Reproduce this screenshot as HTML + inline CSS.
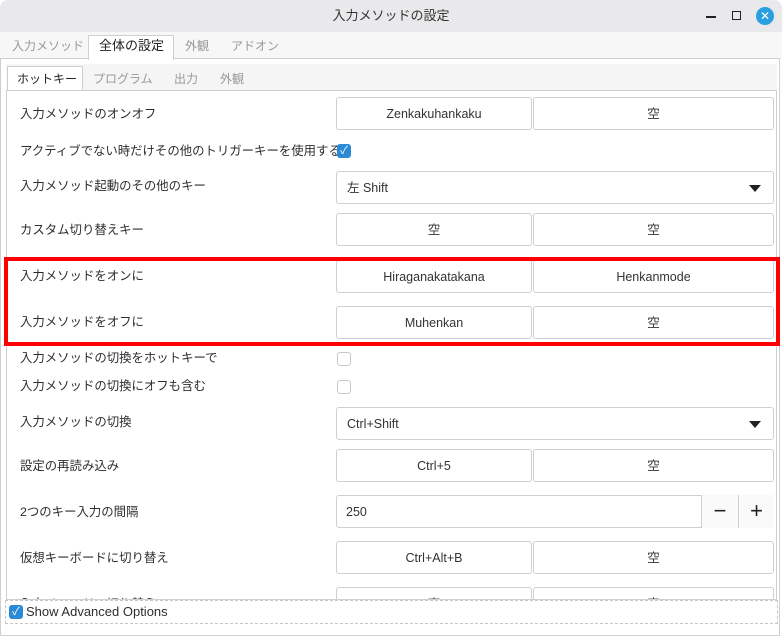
<!DOCTYPE html>
<html><head><meta charset="utf-8"><style>
*{box-sizing:border-box;margin:0;padding:0}
body{width:782px;height:639px;overflow:hidden;background:#fff;font-family:"Liberation Sans","Noto Sans CJK JP",sans-serif;font-size:12.5px;color:#2e2e2e;position:relative}
.a{position:absolute}
.title{left:0;top:0;width:782px;height:32px;background:#e9e9eb;border-radius:8px 8px 0 0;text-align:center;line-height:32px;font-size:13px;color:#333}
.otabs{left:0;top:32px;width:782px;height:26px;background:#f7f7f7}
.tab{position:absolute;line-height:26px;color:#999;font-size:12px}
.frame{left:0;top:58px;width:780px;height:578px;border:1px solid #cfcfd2;background:#fff}
.itabs{left:6px;top:64px;width:771px;height:26px;background:#f5f5f5}
.inner{left:6px;top:90px;width:771px;height:510px;border:1px solid #cfcfd2;overflow:hidden;background:#fff}
.btn{position:absolute;height:33px;border:1px solid #cfcfd3;border-radius:3px;background:#fff;text-align:center;line-height:33px;font-size:12.5px;color:#333}
.lbl{position:absolute;left:14px;font-size:12.4px;color:#2e2e2e;line-height:16px}
.cb{position:absolute;width:14px;height:14px;border:1px solid #c9c9cc;border-radius:3px;background:#fff}
.cbon{background:#2a8ad6;border-color:#2a8ad6;color:#fff;font-size:11px;line-height:12px;text-align:center}
.arrow{position:absolute;right:12px;top:13px;width:0;height:0;border-left:6px solid transparent;border-right:6px solid transparent;border-top:7px solid #222}
.pm{position:absolute;top:-1px;height:33px;border-left:1px solid #cfcfd3;background:#fafafa;font-size:22px;line-height:31px;color:#222;text-align:center}
</style></head><body>
<div class="a title">入力メソッドの設定</div>
<div class="a" style="left:706px;top:16px;width:10px;height:1.5px;background:#222"></div>
<div class="a" style="left:732px;top:11px;width:9px;height:9px;border:1.5px solid #222"></div>
<div class="a" style="left:756px;top:7px;width:18px;height:18px;border-radius:50%;background:#2a9fe0;color:#fff;text-align:center;line-height:18px;font-size:12px">✕</div>
<div class="a otabs"></div>
<div class="a frame"></div>
<div class="a" style="left:88px;top:35px;width:86px;height:25px;background:#fff;border:1px solid #cfcfd2;border-bottom:none"></div>
<div class="tab" style="left:12px;top:33px">入力メソッド</div>
<div class="tab" style="left:99px;top:33px;color:#222;font-size:13px">全体の設定</div>
<div class="tab" style="left:185px;top:33px">外観</div>
<div class="tab" style="left:231px;top:33px">アドオン</div>
<div class="a itabs"></div>
<div class="a" style="left:7px;top:66px;width:76px;height:25px;background:#fff;border:1px solid #cfcfd2;border-bottom:none"></div>
<div class="tab" style="left:17px;top:66px;color:#222">ホットキー</div>
<div class="tab" style="left:93px;top:66px">プログラム</div>
<div class="tab" style="left:174px;top:66px">出力</div>
<div class="tab" style="left:220px;top:66px">外観</div>
<div class="a inner">
<div style="position:absolute;left:-7px;top:-91px;width:782px;height:700px">
<div class="lbl" style="left:20px;top:106px">入力メソッドのオンオフ</div>
<div class="btn" style="left:336px;top:97px;width:196px">Zenkakuhankaku</div>
<div class="btn" style="left:533px;top:97px;width:241px">空</div>
<div class="lbl" style="left:20px;top:143px">アクティブでない時だけその他のトリガーキーを使用する</div>
<div class="cb cbon" style="left:337px;top:144px">✓</div>
<div class="lbl" style="left:20px;top:178px">入力メソッド起動のその他のキー</div>
<div class="btn" style="left:336px;top:171px;width:438px;text-align:left;padding-left:10px">左 Shift<div class="arrow"></div></div>
<div class="lbl" style="left:20px;top:222px">カスタム切り替えキー</div>
<div class="btn" style="left:336px;top:213px;width:196px">空</div>
<div class="btn" style="left:533px;top:213px;width:241px">空</div>
<div class="lbl" style="left:20px;top:268px">入力メソッドをオンに</div>
<div class="btn" style="left:336px;top:260px;width:196px">Hiraganakatakana</div>
<div class="btn" style="left:533px;top:260px;width:241px">Henkanmode</div>
<div class="lbl" style="left:20px;top:314px">入力メソッドをオフに</div>
<div class="btn" style="left:336px;top:306px;width:196px">Muhenkan</div>
<div class="btn" style="left:533px;top:306px;width:241px">空</div>
<div class="lbl" style="left:20px;top:350px">入力メソッドの切換をホットキーで</div>
<div class="cb" style="left:337px;top:352px"></div>
<div class="lbl" style="left:20px;top:378px">入力メソッドの切換にオフも含む</div>
<div class="cb" style="left:337px;top:380px"></div>
<div class="lbl" style="left:20px;top:414px">入力メソッドの切換</div>
<div class="btn" style="left:336px;top:407px;width:438px;text-align:left;padding-left:10px">Ctrl+Shift<div class="arrow"></div></div>
<div class="lbl" style="left:20px;top:458px">設定の再読み込み</div>
<div class="btn" style="left:336px;top:449px;width:196px">Ctrl+5</div>
<div class="btn" style="left:533px;top:449px;width:241px">空</div>
<div class="lbl" style="left:20px;top:504px">2つのキー入力の間隔</div>
<div class="btn" style="left:336px;top:495px;width:438px;text-align:left;padding-left:9px">250
<div class="pm" style="left:364px;width:37px">−</div>
<div class="pm" style="left:401px;width:36px">+</div></div>
<div class="lbl" style="left:20px;top:550px">仮想キーボードに切り替え</div>
<div class="btn" style="left:336px;top:541px;width:196px">Ctrl+Alt+B</div>
<div class="btn" style="left:533px;top:541px;width:241px">空</div>
<div class="lbl" style="left:20px;top:596px">入力メソッドの切り替え</div>
<div class="btn" style="left:336px;top:587px;width:196px">空</div>
<div class="btn" style="left:533px;top:587px;width:241px">空</div>
</div></div>
<div class="a" style="left:5px;top:600px;width:773px;height:24px;border:1px dashed #c6c6c9;background:#fff"></div>
<div class="cb cbon" style="left:9px;top:605px">✓</div>
<div class="a" style="left:26px;top:604px;font-size:13px;color:#2e2e2e">Show Advanced Options</div>
<div class="a" style="left:4px;top:257px;width:776px;height:89px;border:4px solid #ff0000"></div>
</body></html>
